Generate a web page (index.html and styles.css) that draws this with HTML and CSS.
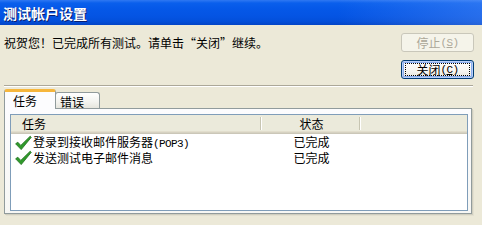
FILE: index.html
```html
<!DOCTYPE html>
<html lang="zh-CN">
<head>
<meta charset="utf-8">
<title>测试帐户设置</title>
<link rel="stylesheet" href="styles.css">
</head>
<body>
<div class="dialog">
  <div class="titlebar"><span class="title">测试帐户设置</span></div>
  <div class="content">
    <div class="top">
      <p class="message">祝贺您！已完成所有测试。请单击“关闭”继续。</p>
      <div class="buttons">
        <button class="btn" disabled>停止<span class="ascii">(<u>S</u>)</span></button>
        <button class="btn default"><span class="focus">关闭<span class="ascii">(<u>C</u>)</span></span></button>
      </div>
    </div>
    <div class="sep"></div>
    <div class="tabs">
      <div class="tab active">任务</div>
      <div class="tab">错误</div>
    </div>
    <div class="panel">
      <div class="list">
        <div class="header">
          <div class="hcell c1">任务</div>
          <div class="hcell c2">状态</div>
          <div class="hcell c3"></div>
        </div>
        <div class="row">
          <div class="cell c1">
            <svg class="check" width="17" height="16" viewBox="0 0 17 16"><path d="M0.6 8.8 L2.8 7.2 L5.8 10.4 L15.2 1.2 L16.3 2.3 L6.2 14.6 Z" fill="#2f9a2a" stroke="#1d6e1a" stroke-width="0.8" stroke-linejoin="round"/></svg>
            <span>登录到接收邮件服务器<span class="ascii">(POP3)</span></span>
          </div>
          <div class="cell c2">已完成</div>
        </div>
        <div class="row">
          <div class="cell c1">
            <svg class="check" width="17" height="16" viewBox="0 0 17 16"><path d="M0.6 8.8 L2.8 7.2 L5.8 10.4 L15.2 1.2 L16.3 2.3 L6.2 14.6 Z" fill="#2f9a2a" stroke="#1d6e1a" stroke-width="0.8" stroke-linejoin="round"/></svg>
            <span>发送测试电子邮件消息</span>
          </div>
          <div class="cell c2">已完成</div>
        </div>
      </div>
    </div>
  </div>
</div>
</body>
</html>
```
FILE: styles.css
```css
* { box-sizing: border-box; }
html, body { margin: 0; padding: 0; }
body {
  width: 482px;
  height: 225px;
  overflow: hidden;
  background: #ECE9D8;
  font-family: "Noto Sans CJK SC", "Liberation Sans", sans-serif;
  font-size: 12px;
  color: #000;
}
.dialog { width: 482px; height: 225px; }
.titlebar {
  height: 25px;
  padding-left: 3px;
  display: flex;
  align-items: center;
  background:
    linear-gradient(to right, rgba(255,255,255,0) 70%, rgba(120,170,255,0.3) 100%),
    linear-gradient(to bottom, #2f78f2 0%, #0a5fec 12%, #0558e8 35%, #0454e3 65%, #034fda 85%, #0344c6 100%);
}
.title {
  color: #fff;
  font-weight: bold;
  font-size: 14px;
  line-height: 16px;
  text-shadow: 1px 1px 0 #0a1e6e;
}
.top {
  display: flex;
  justify-content: space-between;
  padding: 8px 8px 0 4px;
}
.message {
  margin: 3px 0 0;
  line-height: 14px;
}
.buttons {
  display: flex;
  flex-direction: column;
  gap: 8px;
}
.ascii {
  font-family: "Liberation Mono", "DejaVu Sans Mono", monospace;
  font-size: 11px;
  letter-spacing: -0.6px;
}
.btn {
  width: 73px;
  height: 19px;
  padding: 0;
  font: inherit;
  font-size: 12px;
  line-height: 14px;
  border-radius: 3px;
  background: linear-gradient(to bottom, #fff 0%, #f6f5f0 60%, #e6e4da 100%);
  border: 1px solid #003c74;
  color: #000;
  display: flex;
  align-items: center;
  justify-content: center;
}
.btn[disabled] {
  border-color: #c9c7ba;
  background: #f5f4ea;
  color: #aca899;
}
.btn.default {
  box-shadow: inset 0 0 0 1px #b8cff8, inset 0 0 0 2px #8aaeef;
}
.focus {
  display: flex;
  align-items: center;
  justify-content: center;
  width: 65px;
  height: 13px;
  border: 1px dotted #000;
}
.sep {
  margin: 6px 9px 0 4px;
  border-top: 1px solid #aca899;
  border-bottom: 1px solid #fff;
}
.tabs {
  display: flex;
  align-items: flex-end;
  height: 19px;
  margin-top: 2px;
  padding-left: 4px;
}
.tab {
  height: 16px;
  width: 45px;
  margin-left: -1px;
  padding: 3px 0 0 4px;
  line-height: 12px;
  border: 1px solid #919b9c;
  border-bottom: none;
  border-radius: 3px 3px 0 0;
  background: linear-gradient(to bottom, #fff 0%, #f3f3ef 60%, #e6e5dd 100%);
}
.tab.active {
  position: relative;
  z-index: 1;
  margin-left: 0;
  width: 52px;
  height: 20px;
  margin-bottom: -1px;
  padding: 3px 0 0 8px;
  border-top: 3px solid #f6b63c;
  background: #fcfcfe;
}
.panel {
  margin-left: 4px;
  width: 468px;
  height: 106px;
  border: 1px solid #919b9c;
  background: linear-gradient(to bottom, #fcfcfe 0%, #f7f7f4 100%);
  box-shadow: 1px 1px 0 #d0cebf, 2px 2px 0 #e3e0d0;
  padding: 5px 3px 2px 5px;
}
.list {
  width: 458px;
  height: 97px;
  border: 1px solid #7f9db9;
  background: #fff;
}
.header {
  display: grid;
  grid-template-columns: 251px 99px 1fr;
  height: 19px;
  background: #ebeadb;
  box-shadow: inset 0 -1px 0 #cbc7b8, inset 0 -2px 0 #d6d2c2, inset 0 -3px 0 #e2decd;
}
.hcell {
  line-height: 18px;
  background:
    linear-gradient(#c7c5b2, #c7c5b2) right 1px top 2px / 1px 13px no-repeat,
    linear-gradient(#fff, #fff) right 0 top 2px / 1px 13px no-repeat;
}
.hcell.c1 { padding-left: 11px; }
.hcell.c2 { text-align: center; }
.hcell.c3 { background: none; }
.row {
  display: grid;
  grid-template-columns: 251px 99px 1fr;
  height: 16px;
  line-height: 16px;
}
.cell.c1 {
  display: flex;
  align-items: center;
  padding-left: 4px;
}
.check { flex: none; margin-right: 1px; }
.cell.c2 { text-align: center; }
```
